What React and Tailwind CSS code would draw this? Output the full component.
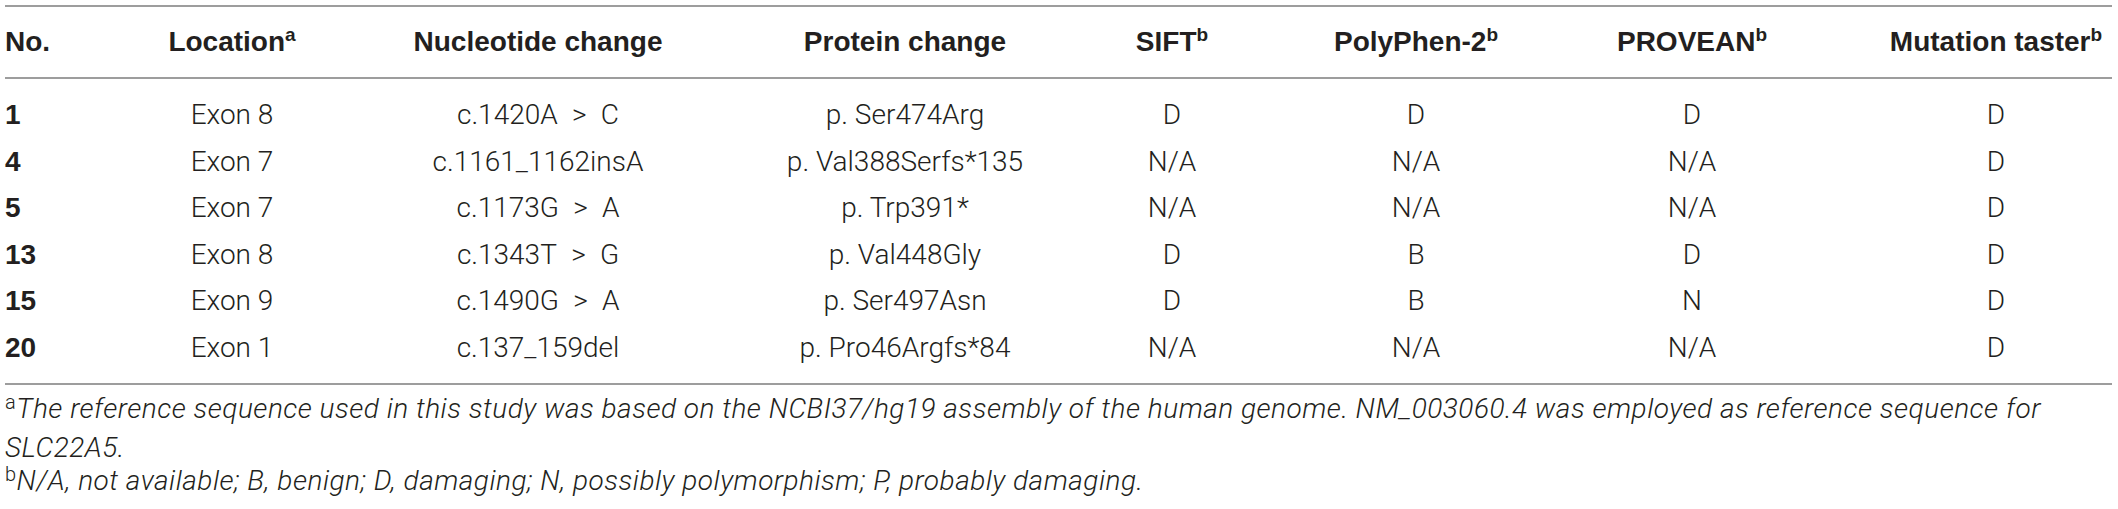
const columns = [
  { label: "No." },
  { label: "Location", sup: "a" },
  { label: "Nucleotide change" },
  { label: "Protein change" },
  { label: "SIFT", sup: "b" },
  { label: "PolyPhen-2", sup: "b" },
  { label: "PROVEAN", sup: "b" },
  { label: "Mutation taster", sup: "b" },
];

// en spaces around ">" to match the wide spacing of the original
const gt = (a, b) => `${a}\u2002>\u2002${b}`;

const rows = [
  ["1", "Exon 8", gt("c.1420A", "C"), "p. Ser474Arg", "D", "D", "D", "D"],
  ["4", "Exon 7", "c.1161_1162insA", "p. Val388Serfs*135", "N/A", "N/A", "N/A", "D"],
  ["5", "Exon 7", gt("c.1173G", "A"), "p. Trp391*", "N/A", "N/A", "N/A", "D"],
  ["13", "Exon 8", gt("c.1343T", "G"), "p. Val448Gly", "D", "B", "D", "D"],
  ["15", "Exon 9", gt("c.1490G", "A"), "p. Ser497Asn", "D", "B", "N", "D"],
  ["20", "Exon 1", "c.137_159del", "p. Pro46Argfs*84", "N/A", "N/A", "N/A", "D"],
];

const grid =
  "grid grid-cols-[130px_194px_418px_316px_218px_270px_282px_279px]";

function cellClass(i) {
  if (i === 0) return "text-left";
  if (i === 7) return "text-center pl-[47px]";
  return "text-center";
}

export default function App() {
  return (
    <div className="w-[2118px] h-[509px] bg-white overflow-hidden pt-[5px] pl-[5px] text-[#231f20] font-['Liberation_Sans',Arial,sans-serif]">
      <div className="w-[2107px]">
        {/* HEADER */}
        <div className={`${grid} border-t-2 border-b-2 border-[#9d9d9d] h-[74px] items-center text-[28px] font-bold`}>
          {columns.map((c, i) => (
            <div key={c.label} className={cellClass(i)}>
              {c.label}
              {c.sup && <sup className="text-[19px] -top-[0.55em]">{c.sup}</sup>}
            </div>
          ))}
        </div>

        {/* BODY */}
        <div className="pt-[13px] pb-[12px] border-b-2 border-[#9d9d9d] text-[28px] leading-[46.5px]">
          {rows.map((r) => (
            <div key={r[0]} className={grid}>
              {r.map((v, i) => (
                <div
                  key={i}
                  className={
                    i === 0
                      ? "text-left font-bold"
                      : `${cellClass(i)} font-['Roboto',sans-serif] font-light whitespace-nowrap`
                  }
                >
                  {v}
                </div>
              ))}
            </div>
          ))}
        </div>

        {/* FOOTNOTES */}
        <div className="pt-[4px] text-[28px] font-['Roboto',sans-serif] font-light tracking-[0.5px]">
          <p className="leading-[39px]">
            <sup className="text-[20px] -top-[0.45em]">a</sup>
            <i>
              The reference sequence used in this study was based on the NCBI37/hg19 assembly of the human genome. NM_003060.4 was employed as reference sequence for
              <br />
              SLC22A5.
            </i>
          </p>
          <p className="leading-[28px]">
            <sup className="text-[20px] -top-[0.45em]">b</sup>
            <i>N/A, not available; B, benign; D, damaging; N, possibly polymorphism; P, probably damaging.</i>
          </p>
        </div>
      </div>
    </div>
  );
}
